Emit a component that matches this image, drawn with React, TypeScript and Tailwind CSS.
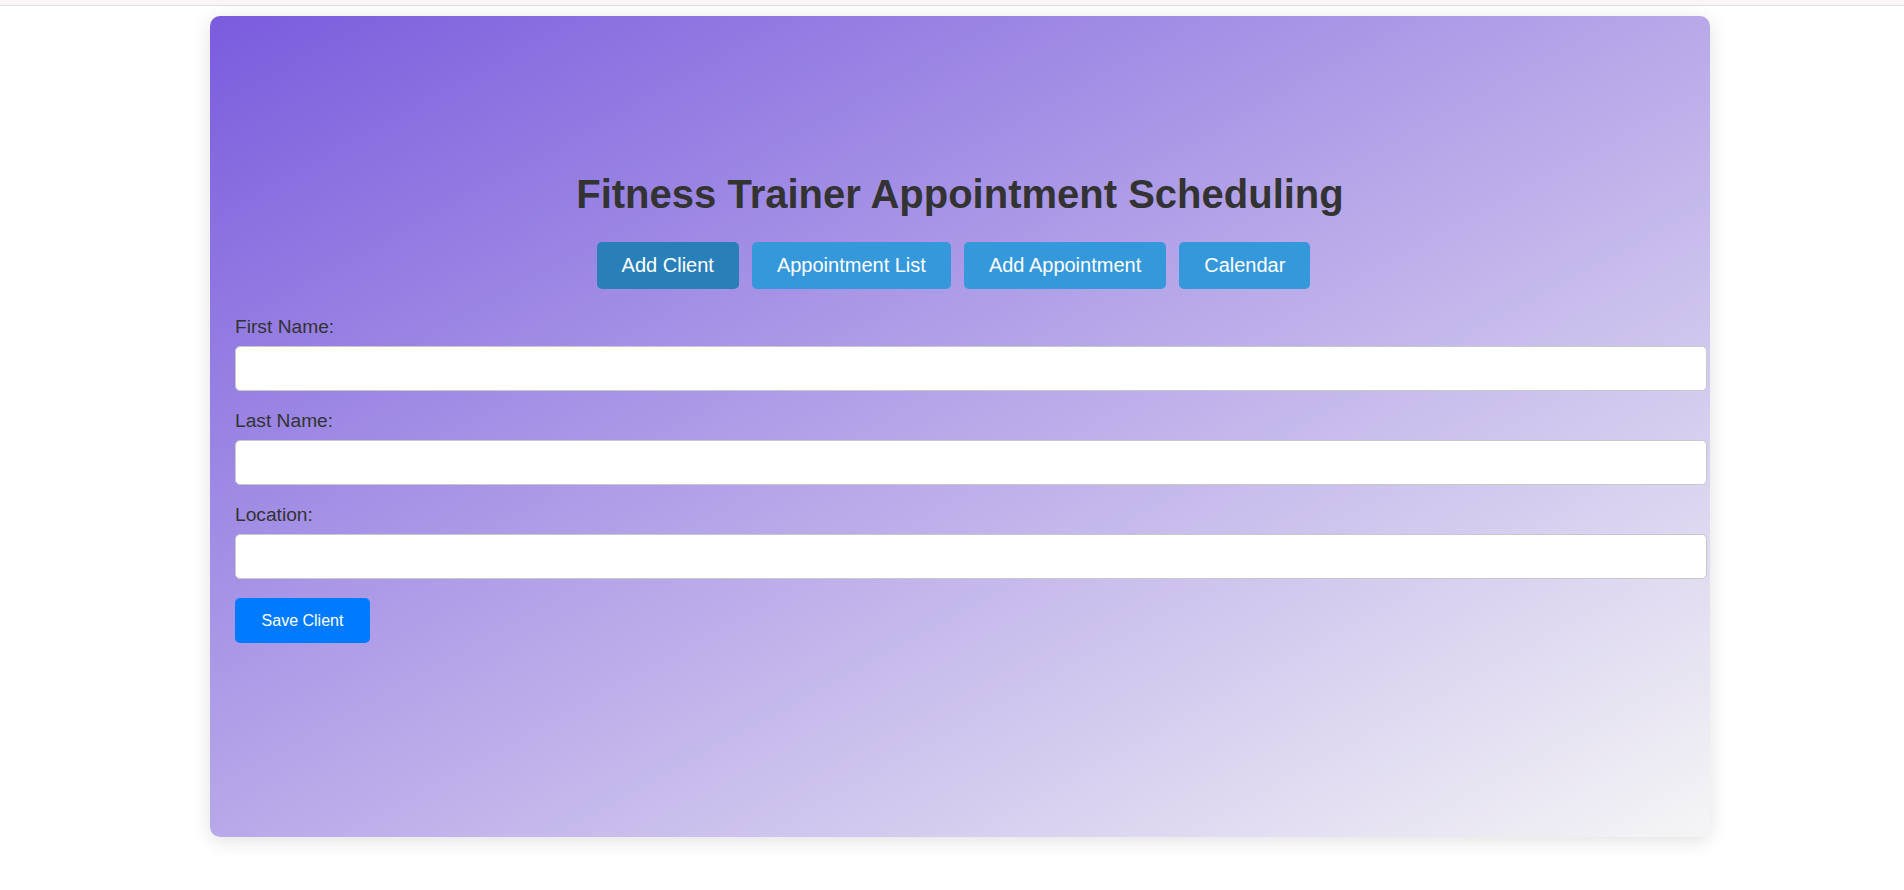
const navItems = ["Add Client", "Appointment List", "Add Appointment", "Calendar"];

const fields = [
  { id: "firstName", label: "First Name:" },
  { id: "lastName", label: "Last Name:" },
  { id: "location", label: "Location:" },
];

export default function App() {
  return (
    <div className="min-h-screen bg-white font-['Liberation_Sans',Arial,sans-serif]">
      <div className="h-[6px] bg-[#faf5f6] border-b border-[#e2e0e0]" />

      <div className="ml-[210px] mt-[10px] w-[1500px] h-[821px] rounded-[10px] bg-[linear-gradient(to_bottom_right,#7a5cdd,#f5f5f5)] shadow-[0_4px_20px_rgba(0,0,0,0.12)] pt-[155px]">
        <h1 className="text-center text-[40px] leading-[46px] font-bold text-[#333]">
          Fitness Trainer Appointment Scheduling
        </h1>

        <nav className="mt-[25px] flex justify-center gap-[13px] pr-[13px]">
          {navItems.map((item, i) => (
            <button
              key={item}
              className={
                i === 0
                  ? "h-[47px] px-[25px] rounded-[5px] bg-[#2980b9] text-white text-[20px] leading-[23px]"
                  : "h-[47px] px-[25px] rounded-[5px] bg-[#3498db] text-white text-[20px] leading-[23px]"
              }
            >
              {item}
            </button>
          ))}
        </nav>

        <form className="mt-[27px] px-[25px]">
          {fields.map((f) => (
            <div key={f.id}>
              <label
                htmlFor={f.id}
                className="block text-[19.2px] leading-[22px] text-[#333] mb-[8px]"
              >
                {f.label}
              </label>
              <input
                id={f.id}
                type="text"
                className="block box-content w-full h-[23px] py-[10px] px-[10px] mb-[19px] bg-white border border-[#c8c8c8] rounded-[5px] text-[20px]"
              />
            </div>
          ))}
          <button
            type="button"
            className="h-[45px] w-[135px] rounded-[5px] bg-[#007bff] text-white text-[16px]"
          >
            Save Client
          </button>
        </form>
      </div>
    </div>
  );
}
